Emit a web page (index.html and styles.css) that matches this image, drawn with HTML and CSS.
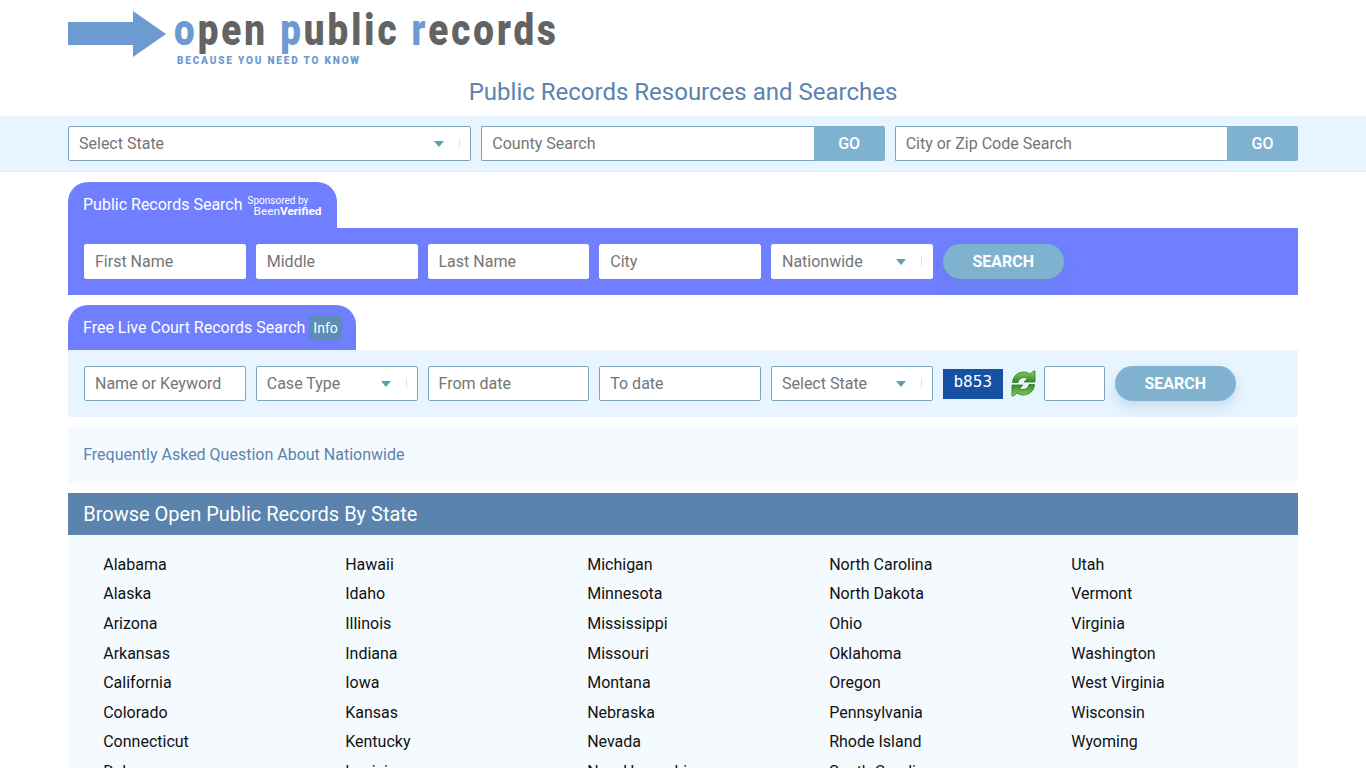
FILE: index.html
```html
<!DOCTYPE html>
<html lang="en">
<head>
    <meta charset="UTF-8">
    <meta name="viewport" content="width=device-width, initial-scale=1.0">
    <title>Open Public Records</title>
    <link rel="stylesheet" href="styles.css">
</head>
<body>

    <header class="container logo-row">
        <a class="logo" href="#">
            <svg class="logo-arrow" width="98" height="46" viewBox="0 0 98 46">
                <polygon points="0,11 65,11 65,0 98,23 65,46 65,34 0,34" fill="#6b9bd0"/>
            </svg>
            <span class="logo-words">
                <span class="logo-name"><b>o</b>pen <b>p</b>ublic <b>r</b>ecords</span>
                <span class="logo-tag">BECAUSE YOU NEED TO KNOW</span>
            </span>
        </a>
    </header>

    <h1 class="site-title">Public Records Resources and Searches</h1>

    <div class="top-band">
        <div class="container top-search">
            <div class="select-wrap">
                <select class="field"><option>Select State</option></select>
            </div>
            <div class="input-group">
                <input class="field" type="text" placeholder="County Search">
                <button class="go-btn">GO</button>
            </div>
            <div class="input-group">
                <input class="field" type="text" placeholder="City or Zip Code Search">
                <button class="go-btn">GO</button>
            </div>
        </div>
    </div>

    <main class="container">
        <section class="search-block">
            <div class="tab">
                <span>Public Records Search</span>
                <span class="sponsor">
                    <small>Sponsored by</small>
                    <small class="sponsor-name">Been<b>Verified</b></small>
                </span>
            </div>
            <form class="panel panel-people">
                <input class="field flat" type="text" placeholder="First Name">
                <input class="field flat" type="text" placeholder="Middle">
                <input class="field flat" type="text" placeholder="Last Name">
                <input class="field flat" type="text" placeholder="City">
                <div class="select-wrap">
                    <select class="field flat"><option>Nationwide</option></select>
                </div>
                <button class="search-btn" type="button">SEARCH</button>
            </form>
        </section>

        <section class="search-block">
            <div class="tab tab-court">
                <span>Free Live Court Records Search</span>
                <span class="info-badge">Info</span>
            </div>
            <form class="panel panel-court">
                <input class="field" type="text" placeholder="Name or Keyword">
                <div class="select-wrap">
                    <select class="field"><option>Case Type</option></select>
                </div>
                <input class="field" type="text" placeholder="From date">
                <input class="field" type="text" placeholder="To date">
                <div class="select-wrap">
                    <select class="field"><option>Select State</option></select>
                </div>
                <div class="captcha">
                    <span class="captcha-code">b853</span>
                    <svg class="captcha-refresh" width="27" height="27" viewBox="0 0 27 27">
                        <defs>
                            <linearGradient id="refresh-green" x1="0" y1="0" x2="0" y2="1">
                                <stop offset="0" stop-color="#8ccb5a"/>
                                <stop offset="1" stop-color="#2f8a1e"/>
                            </linearGradient>
                        </defs>
                        <path d="M2.500 12.500 C3 6 8 2 14 2 C16.500 2 18.500 3 20 4 L23.500 1 L25 1 L25 12 L14 12 L17.500 8.500 C16.500 7.800 15 7.500 14 7.500 C11 7.500 8.500 9.500 8 12.500 Z" fill="url(#refresh-green)" stroke="#2e7a1e" stroke-width="0.8"/>
                        <path d="M2.500 12.500 C3 6 8 2 14 2 C16.500 2 18.500 3 20 4 L23.500 1 L25 1 L25 12 L14 12 L17.500 8.500 C16.500 7.800 15 7.500 14 7.500 C11 7.500 8.500 9.500 8 12.500 Z" fill="url(#refresh-green)" stroke="#2e7a1e" stroke-width="0.8" transform="rotate(180 13.500 13.500)"/>
                    </svg>
                    <input class="field captcha-input" type="text">
                </div>
                <button class="search-btn" type="button">SEARCH</button>
            </form>
        </section>

        <div class="faq">
            <a href="#">Frequently Asked Question About Nationwide</a>
        </div>

        <section class="states">
            <h2 class="states-title">Browse Open Public Records By State</h2>
            <ul class="states-list">
                <li>Alabama</li><li>Alaska</li><li>Arizona</li><li>Arkansas</li><li>California</li><li>Colorado</li><li>Connecticut</li><li>Delaware</li><li>District of Columbia</li><li>Florida</li><li>Georgia</li>
                <li>Hawaii</li><li>Idaho</li><li>Illinois</li><li>Indiana</li><li>Iowa</li><li>Kansas</li><li>Kentucky</li><li>Louisiana</li><li>Maine</li><li>Maryland</li><li>Massachusetts</li>
                <li>Michigan</li><li>Minnesota</li><li>Mississippi</li><li>Missouri</li><li>Montana</li><li>Nebraska</li><li>Nevada</li><li>New Hampshire</li><li>New Jersey</li><li>New Mexico</li><li>New York</li>
                <li>North Carolina</li><li>North Dakota</li><li>Ohio</li><li>Oklahoma</li><li>Oregon</li><li>Pennsylvania</li><li>Rhode Island</li><li>South Carolina</li><li>South Dakota</li><li>Tennessee</li><li>Texas</li>
                <li>Utah</li><li>Vermont</li><li>Virginia</li><li>Washington</li><li>West Virginia</li><li>Wisconsin</li><li>Wyoming</li>
            </ul>
        </section>
    </main>

</body>
</html>
```

FILE: styles.css
```css
:root {
    --blue-dark: #5a83ad;
    --blue-btn: #7fb2cf;
    --blue-logo: #6b9bd0;
    --purple: #6f7fff;
    --band: #e8f4ff;
    --pale: #f5faff;
    --field-border: #7fa5bd;
}

* {
    margin: 0;
    padding: 0;
    box-sizing: border-box;
}

body {
    font-family: Roboto, Arial, sans-serif;
    background-color: #fff;
    color: #111;
    font-size: 16px;
}

.container {
    width: 1230px;
    margin: 0 auto;
}

.logo-row {
    height: 68px;
    padding-top: 11px;
}

.logo {
    display: flex;
    align-items: flex-start;
    text-decoration: none;
}

.logo-arrow {
    flex: none;
}

.logo-words {
    display: block;
    margin-left: 8px;
    margin-top: -9px;
}

.logo-name {
    display: block;
    width: 560px;
    height: 56px;
    font-size: 44px;
    line-height: 56px;
    font-weight: 900;
    color: #636363;
    letter-spacing: 3.6px;
    white-space: nowrap;
    transform: scaleX(0.834);
    transform-origin: left top;
}

.logo-name b {
    color: var(--blue-logo);
}

.logo-tag {
    display: block;
    margin: -3px 0 0 3px;
    font-size: 10px;
    line-height: 12px;
    font-weight: 900;
    letter-spacing: 1.83px;
    color: var(--blue-logo);
    white-space: nowrap;
}

.site-title {
    height: 48px;
    font-size: 24px;
    line-height: 48px;
    font-weight: 400;
    text-align: center;
    color: var(--blue-dark);
}

.top-band {
    height: 56px;
    padding-top: 10px;
    background-color: var(--band);
    border-bottom: 1px solid #dcebf5;
}

.top-search {
    display: grid;
    grid-template-columns: repeat(3, 1fr);
    gap: 10px;
}

.field {
    width: 100%;
    height: 35px;
    padding: 0 10px;
    border: 1px solid var(--field-border);
    border-radius: 2px;
    background-color: #fff;
    font-family: Roboto, Arial, sans-serif;
    font-size: 16px;
    color: #757575;
    outline: none;
    appearance: none;
}

.field::placeholder {
    color: #757575;
    opacity: 1;
}

.field.flat {
    border-color: #fff;
}

.select-wrap {
    position: relative;
}

.select-wrap:before {
    content: "";
    position: absolute;
    top: 15px;
    right: 27px;
    border-top: 6px solid #5b9fb8;
    border-left: 5px solid transparent;
    border-right: 5px solid transparent;
}

.select-wrap:after {
    content: "";
    position: absolute;
    top: 12px;
    right: 11px;
    width: 1px;
    height: 10px;
    background-color: #e4e4e4;
}

.input-group {
    display: flex;
}

.input-group .field {
    flex: 1;
    min-width: 0;
    border-right: none;
    border-radius: 2px 0 0 2px;
}

.go-btn {
    width: 71px;
    height: 35px;
    border: none;
    border-radius: 0 2px 2px 0;
    background-color: var(--blue-btn);
    color: #fff;
    font-family: Roboto, Arial, sans-serif;
    font-size: 16px;
    font-weight: 500;
}

.search-block {
    margin-top: 10px;
}

.tab {
    display: inline-flex;
    align-items: center;
    gap: 5px;
    height: 46px;
    padding: 0 15.500px 2px 15px;
    border-radius: 20px 20px 0 0;
    background-color: var(--purple);
    color: #fff;
    vertical-align: top;
}

.tab-court {
    height: 45px;
    gap: 4px;
    padding: 0 14px 0 15px;
}

.sponsor {
    display: flex;
    flex-direction: column;
    align-items: flex-start;
    line-height: 10px;
    margin-top: 3px;
}

.sponsor small {
    font-size: 10px;
}

.sponsor .sponsor-name {
    margin-left: 6px;
    font-size: 11.800px;
}

.info-badge {
    padding: 0 4px;
    height: 24px;
    line-height: 25px;
    font-size: 14px;
    border-radius: 2px;
    background-color: #5b8db5;
}

.panel {
    display: grid;
    gap: 10px;
    align-items: center;
    height: 67px;
    padding: 16px;
}

.panel-people {
    grid-template-columns: repeat(5, 161.750px) 121px;
    background-color: var(--purple);
}

.panel-court {
    grid-template-columns: repeat(5, 161.750px) 162px 121px;
    background-color: var(--band);
}

.search-btn {
    height: 35px;
    border: none;
    border-radius: 18px;
    background-color: var(--blue-btn);
    box-shadow: 0 6px 12px rgba(90, 131, 173, 0.22);
    color: #fff;
    font-family: Roboto, Arial, sans-serif;
    font-size: 16px;
    font-weight: 700;
}

.captcha {
    display: flex;
    align-items: center;
}

.captcha-code {
    width: 60px;
    height: 30px;
    background-color: #1651a4;
    color: #fff;
    font-family: "DejaVu Sans Mono", monospace;
    font-size: 16px;
    line-height: 25px;
    text-align: center;
}

.captcha-refresh {
    flex: none;
    margin: 0 7px;
}

.captcha-input {
    width: 61px;
    flex: none;
}

.faq {
    height: 56px;
    margin-top: 10px;
    padding: 0 15.200px;
    background-color: var(--pale);
    line-height: 55px;
}

.faq a {
    color: var(--blue-dark);
    text-decoration: none;
}

.states {
    margin-top: 10px;
}

.states-title {
    height: 42px;
    padding: 0 15.200px;
    background-color: var(--blue-dark);
    color: #fff;
    font-size: 20px;
    font-weight: 400;
    line-height: 42px;
}

.states-list {
    display: grid;
    grid-template-rows: repeat(11, 29.600px);
    grid-auto-flow: column;
    grid-auto-columns: 242px;
    padding: 14.800px 0 15px 35.200px;
    background-color: var(--pale);
    list-style: none;
    line-height: 29.600px;
}
```
